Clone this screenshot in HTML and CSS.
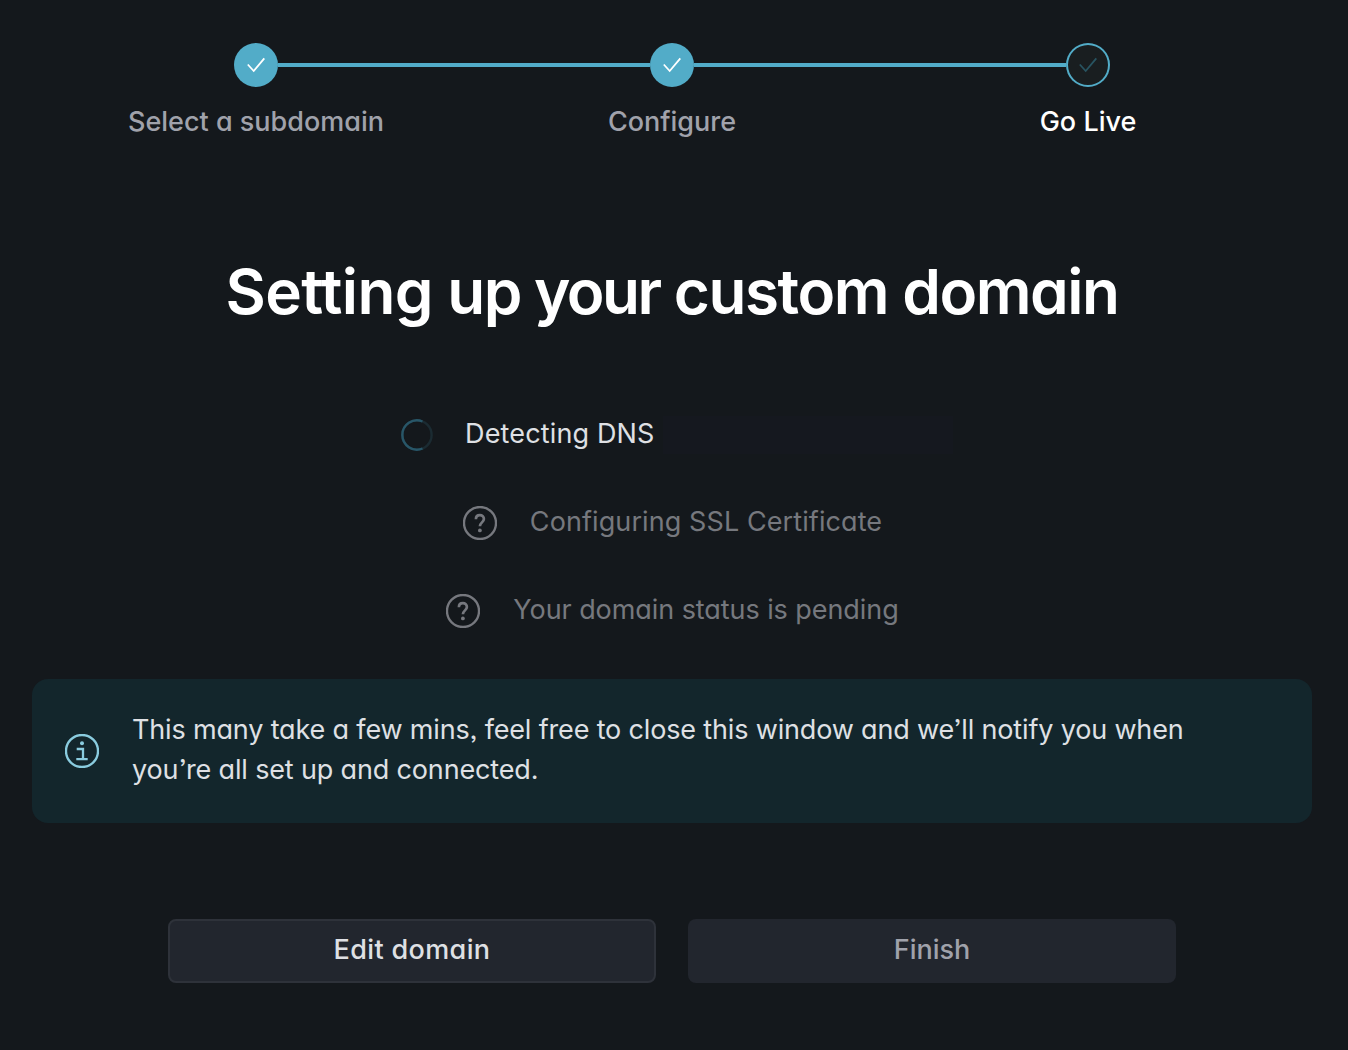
FILE: index.html
```html
<!DOCTYPE html>
<html lang="en">
<head>
<meta charset="utf-8">
<title>Custom domain setup</title>
<link rel="stylesheet" href="styles.css">
</head>
<body>
<main class="page">
  <ol class="stepper">
    <li class="step">
      <span class="marker"><svg viewBox="0 0 44 44"><path d="M13.8 21.5 19.7 28 30.3 15.3"/></svg></span>
      <span class="step-label">Select a subdomain</span>
    </li>
    <li class="step">
      <span class="marker"><svg viewBox="0 0 44 44"><path d="M13.8 21.5 19.7 28 30.3 15.3"/></svg></span>
      <span class="step-label">Configure</span>
    </li>
    <li class="step step-current">
      <span class="marker"><svg viewBox="0 0 44 44"><path d="M13.8 21.5 19.7 28 30.3 15.3"/></svg></span>
      <span class="step-label">Go Live</span>
    </li>
  </ol>

  <h1 class="title"><span class="loose">Setting</span> up<span class="tight"> your</span> custom domain</h1>

  <ul class="tasks">
    <li class="task task-active">
      <svg class="spinner" viewBox="0 0 32 32"><circle class="track" cx="16" cy="16" r="14.6"/><path class="arc" d="M21.5 2.5A14.6 14.6 0 1 0 21.5 29.5"/></svg>
      <span class="task-label">Detecting DNS</span>
      <span class="task-value"></span>
    </li>
    <li class="task task-ssl">
      <svg class="task-icon" viewBox="0 0 34 34"><circle cx="17" cy="17" r="16"/><path class="mark" d="M12.9 13.2c0-2.5 1.7-4.1 4-4.1s4 1.6 4 3.9c0 3.3-4 3.5-4 7.3"/><circle class="dot" cx="16.9" cy="24.4" r="1.9"/></svg>
      <span class="task-label">Configuring SSL Certificate</span>
    </li>
    <li class="task task-status">
      <svg class="task-icon" viewBox="0 0 34 34"><circle cx="17" cy="17" r="16"/><path class="mark" d="M12.9 13.2c0-2.5 1.7-4.1 4-4.1s4 1.6 4 3.9c0 3.3-4 3.5-4 7.3"/><circle class="dot" cx="16.9" cy="24.4" r="1.9"/></svg>
      <span class="task-label">Your domain status is pending</span>
    </li>
  </ul>

  <aside class="notice">
    <svg class="notice-icon" viewBox="0 0 34 34"><circle cx="17" cy="17" r="16"/><path d="M11.7 15H18V25M11.3 25.2H22.7"/><circle class="dot" cx="17" cy="9.3" r="2"/></svg>
    <p class="notice-text">This many take a few mins, feel free to close this window and we’ll notify you when you’re all set up and connected.</p>
  </aside>

  <div class="actions">
    <button class="button button-primary">Edit domain</button>
    <button class="button" disabled>Finish</button>
  </div>
</main>
</body>
</html>
```

FILE: styles.css
```css
* { box-sizing: border-box; }

body {
  margin: 0;
  background: #14181c;
  color: #dfe0e4;
  font-family: Inter, "Liberation Sans", sans-serif;
  font-feature-settings: "cv11", "ss03";
  font-size: 27px;
  line-height: 40px;
}

.page {
  width: 1344px;
  height: 1050px;
  padding: 43px 32px 0;
}

ol, ul {
  margin: 0;
  padding: 0;
  list-style: none;
}

.stepper {
  display: grid;
  grid-template-columns: repeat(3, 416px);
  justify-content: center;
}

.step {
  display: grid;
  grid-template-columns: 1fr 44px 1fr;
  align-items: center;
  row-gap: 15px;
  color: #a0a2ab;
  font-weight: 500;
}

.step::before,
.step::after {
  content: "";
  height: 4px;
  background: #52acc8;
  grid-row: 1;
}

.step::before { grid-column: 1; }
.step::after { grid-column: 3; }
.step:first-child::before,
.step:last-child::after { background: none; }

.marker {
  grid-column: 2;
  grid-row: 1;
  height: 44px;
  border-radius: 50%;
  background: #52acc8;
}

.marker svg {
  display: block;
  fill: none;
  stroke: #fff;
  stroke-width: 1.8;
}

.step-label {
  grid-column: 1 / -1;
  text-align: center;
}

.step-current { color: #fff; }
.step-current .marker {
  background: #191e20;
  box-shadow: inset 0 0 0 2px #52acc8;
}
.step-current svg { stroke: #285461; }

.title {
  margin: 110px 0 0;
  color: #fff;
  font-size: 62px;
  font-weight: 600;
  letter-spacing: -1.46px;
  line-height: 80px;
  text-align: center;
}

.loose { letter-spacing: -0.6px; }
.tight { letter-spacing: -2.5px; }

.tasks {
  display: grid;
  row-gap: 48px;
  margin-top: 82px;
}

.task {
  display: flex;
  justify-content: center;
  gap: 32px;
  color: #76787e;
}

.task-active {
  width: 542px;
  justify-content: flex-start;
  margin: 0 auto;
  color: #dfe0e4;
  letter-spacing: 0.15px;
}

.task-value {
  flex: 1;
  margin: 2px -10px 0 -24px;
  background: #15181f;
}

.task-ssl { letter-spacing: 0.09px; }
.task-status { letter-spacing: -0.07px; }

.task-icon + .task-label { margin: 0 -1px 0 1px; }

.spinner {
  width: 32px;
  height: 32px;
  margin-top: 5px;
  fill: none;
  stroke-width: 2.4;
}

.track { stroke: #1b2b32; }
.arc { stroke: #285668; }

.task-icon,
.notice-icon {
  flex: none;
  width: 34px;
  height: 34px;
  fill: none;
  stroke: currentColor;
  stroke-width: 2.3;
}

.task-icon { margin-top: 4px; }

.mark { stroke-width: 2.7; }

.dot {
  fill: currentColor;
  stroke: none;
}

.notice {
  display: flex;
  align-items: center;
  gap: 33px;
  height: 144px;
  margin-top: 49px;
  padding: 0 33px;
  border-radius: 16px;
  background: #13262c;
}

.notice-icon { color: #8accdf; }

.notice-text {
  max-width: 1100px;
  margin: 0;
  padding-bottom: 2px;
  letter-spacing: -0.16px;
}

.actions {
  display: grid;
  grid-template-columns: 488px 488px;
  gap: 32px;
  justify-content: center;
  margin-top: 96px;
}

.button {
  height: 64px;
  padding: 0 0 2px;
  border: 0;
  border-radius: 8px;
  background: #22262e;
  color: #a0a2ab;
  font: inherit;
  font-weight: 500;
}

.button-primary {
  border: 2px solid #2e323a;
  color: #dfe0e4;
  letter-spacing: 0.36px;
}
```
